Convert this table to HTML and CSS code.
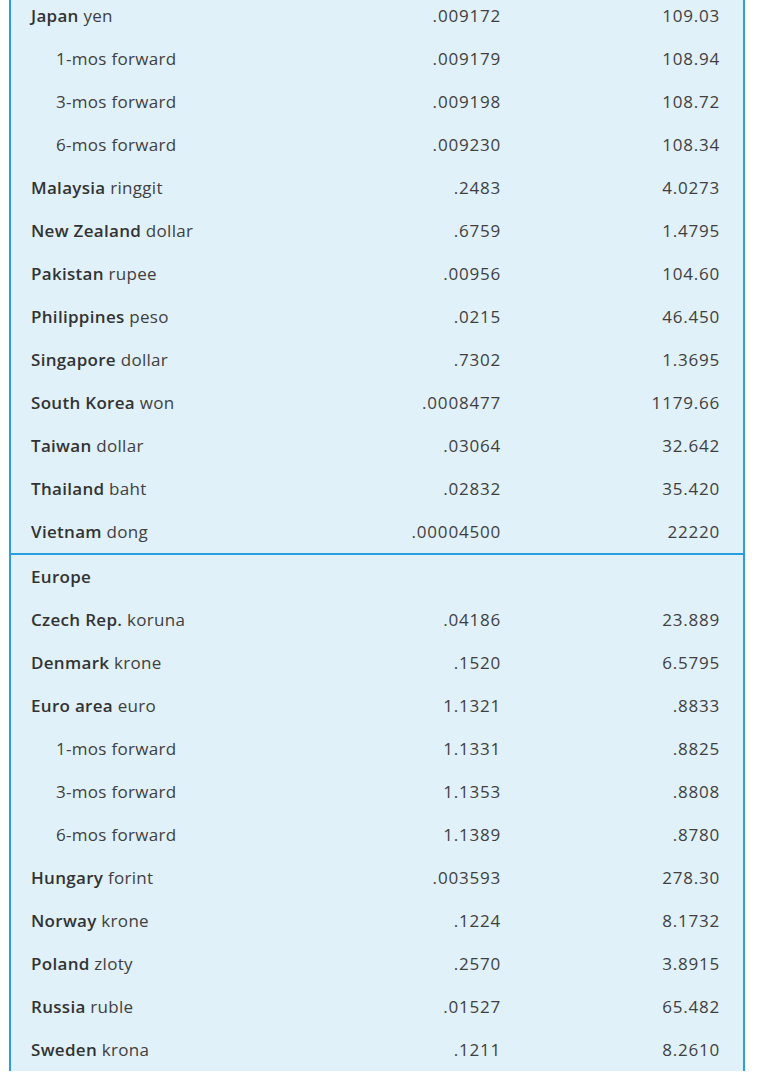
FILE: index.html
```html
<!DOCTYPE html>
<html>
<head>
<meta charset="utf-8">
<link rel="stylesheet" href="styles.css">
</head>
<body>
<div class="table">
  <div class="section">
    <div class="row"><div class="label"><b>Japan</b> yen</div><div class="num">.009172</div><div class="num">109.03</div></div>
    <div class="row"><div class="label sub">1-mos forward</div><div class="num">.009179</div><div class="num">108.94</div></div>
    <div class="row"><div class="label sub">3-mos forward</div><div class="num">.009198</div><div class="num">108.72</div></div>
    <div class="row"><div class="label sub">6-mos forward</div><div class="num">.009230</div><div class="num">108.34</div></div>
    <div class="row"><div class="label"><b>Malaysia</b> ringgit</div><div class="num">.2483</div><div class="num">4.0273</div></div>
    <div class="row"><div class="label"><b>New Zealand</b> dollar</div><div class="num">.6759</div><div class="num">1.4795</div></div>
    <div class="row"><div class="label"><b>Pakistan</b> rupee</div><div class="num">.00956</div><div class="num">104.60</div></div>
    <div class="row"><div class="label"><b>Philippines</b> peso</div><div class="num">.0215</div><div class="num">46.450</div></div>
    <div class="row"><div class="label"><b>Singapore</b> dollar</div><div class="num">.7302</div><div class="num">1.3695</div></div>
    <div class="row"><div class="label"><b>South Korea</b> won</div><div class="num">.0008477</div><div class="num">1179.66</div></div>
    <div class="row"><div class="label"><b>Taiwan</b> dollar</div><div class="num">.03064</div><div class="num">32.642</div></div>
    <div class="row"><div class="label"><b>Thailand</b> baht</div><div class="num">.02832</div><div class="num">35.420</div></div>
    <div class="row"><div class="label"><b>Vietnam</b> dong</div><div class="num">.00004500</div><div class="num">22220</div></div>
  </div>
  <div class="section">
    <div class="row"><div class="label"><b>Europe</b></div><div class="num"></div><div class="num"></div></div>
    <div class="row"><div class="label"><b>Czech Rep.</b> koruna</div><div class="num">.04186</div><div class="num">23.889</div></div>
    <div class="row"><div class="label"><b>Denmark</b> krone</div><div class="num">.1520</div><div class="num">6.5795</div></div>
    <div class="row"><div class="label"><b>Euro area</b> euro</div><div class="num">1.1321</div><div class="num">.8833</div></div>
    <div class="row"><div class="label sub">1-mos forward</div><div class="num">1.1331</div><div class="num">.8825</div></div>
    <div class="row"><div class="label sub">3-mos forward</div><div class="num">1.1353</div><div class="num">.8808</div></div>
    <div class="row"><div class="label sub">6-mos forward</div><div class="num">1.1389</div><div class="num">.8780</div></div>
    <div class="row"><div class="label"><b>Hungary</b> forint</div><div class="num">.003593</div><div class="num">278.30</div></div>
    <div class="row"><div class="label"><b>Norway</b> krone</div><div class="num">.1224</div><div class="num">8.1732</div></div>
    <div class="row"><div class="label"><b>Poland</b> zloty</div><div class="num">.2570</div><div class="num">3.8915</div></div>
    <div class="row"><div class="label"><b>Russia</b> ruble</div><div class="num">.01527</div><div class="num">65.482</div></div>
    <div class="row"><div class="label"><b>Sweden</b> krona</div><div class="num">.1211</div><div class="num">8.2610</div></div>
  </div>
</div>
</body>
</html>
```
FILE: styles.css
```css
html, body {
  margin: 0;
  padding: 0;
  background: #ffffff;
  overflow: hidden;
}
.table {
  margin: -6px 0 0 9px;
  width: 736px;
  box-sizing: border-box;
  border-left: 2px solid #2a9fe0;
  border-right: 2px solid #2a9fe0;
  background: #e1f1fa;
  font-family: "Open Sans", "Lato", sans-serif;
  font-size: 17px;
  letter-spacing: 0.3px;
  color: #404040;
}
.section + .section {
  border-top: 2px solid #2a9fe0;
}
.row {
  display: grid;
  grid-template-columns: 1fr 140px 219px;
  align-items: center;
  height: 43px;
  padding: 0 23px 0 20px;
}
.label b {
  font-weight: 600;
  color: #333333;
}
.sub {
  padding-left: 25px;
}
.num {
  text-align: right;
  letter-spacing: 0.8px;
}
```
